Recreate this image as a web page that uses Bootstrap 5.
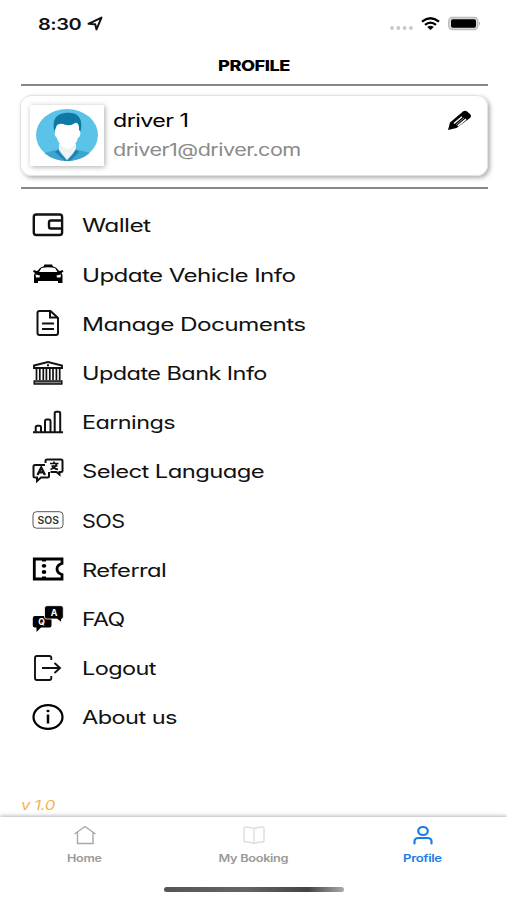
<!DOCTYPE html>
<html lang="en">
<head>
<meta charset="utf-8">
<meta name="viewport" content="width=device-width, initial-scale=1">
<title>Profile</title>
<link href="https://cdn.jsdelivr.net/npm/bootstrap@5.3.0/dist/css/bootstrap.min.css" rel="stylesheet">
<style>
body{font-family:Inter,"Liberation Sans",sans-serif;font-feature-settings:"cv11";color:#111;background:#fff;line-height:1}
.screen{height:900px;overflow:hidden}
svg{display:block;flex:none;overflow:visible}
.fit{display:inline-block;white-space:nowrap;transform-origin:0 50%;letter-spacing:-.025em}
.status{height:48px;padding:0 26px 0 37.5px}
.clock{font-size:16px;font-weight:600;width:42px}
.title{height:36px;padding-left:218px}
.title .fit{font-size:14.5px;font-weight:800;color:#000}
.rule{height:2px;margin:0 19.5px 0 20.5px;background:#878787}
.user{height:81px;margin:9px 19px 11px 20px;border:1px solid #e2e2e2;border-radius:11px;box-shadow:2px 2px 4px rgba(0,0,0,.32);padding:9px 15px 0 9px}
.photo{width:74px;height:61px;background:#fff;box-shadow:1px 1px 5px rgba(0,0,0,.33)}
.who{padding:7px 0 0 9px}
.uname{font-size:18px;height:18px;color:#000}
.mail{font-size:17px;height:18px;margin-top:12.5px;color:#8a8a8a}
.menu{padding:12px 0 0 32px}
.entry{height:49.2px}
.entry .fit{font-size:18.3px;margin-left:17.5px;padding-top:1px}
.version{height:24px;padding-left:20.5px;margin-top:51.8px;color:#f6b252;font-style:italic;font-size:13.5px}
.tabs{height:83px;box-shadow:0 -1px 4px rgba(0,0,0,.3)}
.tab{font-size:10.4px;font-weight:600;color:#9a9a9a;padding-top:8px}
.tab svg{margin-bottom:7px}
.tab.on{color:#1a7cea}
.homebar{width:180px;height:5px;border-radius:3px;background:linear-gradient(90deg,#555,#656565 45%,#444 80%,#aaa)}
</style>
</head>
<body>
<main class="screen d-flex flex-column">
  <header class="status d-flex align-items-center">
    <span class="clock"><span class="fit" data-w="42.5">8:30</span></span>
    <svg class="ms-2" width="16" height="15" viewBox="0 0 16 15"><path d="M.5 7.800 13.500 1.600 8.500 13.400 7.200 8.200Z" fill="none" stroke="#111" stroke-width="2" stroke-linejoin="round"/></svg>
    <svg class="ms-auto me-2 mt-2" width="23" height="4" viewBox="0 0 23 4" fill="#c8c8c8"><circle cx="2" cy="2" r="1.900"/><circle cx="8.300" cy="2" r="1.900"/><circle cx="14.600" cy="2" r="1.900"/><circle cx="20.900" cy="2" r="1.900"/></svg>
    <svg class="me-2" width="19" height="13" viewBox="0 0 19 13" fill="none" stroke="#000" stroke-width="2.300"><path d="M1 4.600Q9.500-2.100 18 4.600M4 7.900Q9.500 3.400 15 7.900"/><path d="M6.200 9.900Q9.500 7.600 12.800 9.900L9.500 12.900Z" fill="#000" stroke="none"/></svg>
    <svg width="33" height="13" viewBox="0 0 33 13"><rect x=".8" y=".5" width="29" height="12" rx="3.500" fill="#ddd" stroke="#bbb" stroke-width="1.400"/><rect x="3" y="2.300" width="25" height="8.500" rx="1.800"/><path d="M31 4.500Q33 6.500 31 8.500Z" fill="#aaa"/></svg>
  </header>
  <h1 class="title d-flex align-items-center m-0"><span class="fit" data-w="71.500">PROFILE</span></h1>
  <div class="rule"></div>
  <section class="user d-flex align-items-start">
    <div class="photo d-flex align-items-center justify-content-center">
      <svg width="62" height="52" viewBox="0 0 62 52">
        <defs><clipPath id="face"><ellipse cx="31" cy="26" rx="31" ry="26"/></clipPath></defs>
        <g clip-path="url(#face)">
          <rect width="62" height="52" fill="#5cc3e8"/>
          <path d="M5 52 8 45Q10 43 20 41L31 50 42 41Q53 43 55 45L58 52Z" fill="#3da3d0"/>
          <path d="M23 35V41L31 51 40 41V35Z" fill="#eef2f5"/>
          <path d="M22 40 19 43 29 52H31Q25 46 22 40ZM40 40 43 43 34 52H31Q37 46 40 40Z" fill="#2381ae"/>
          <path d="M18 21C16 8 22 5 29 4 39 3 47 6 45 21L42 25H20Z" fill="#0c7aa5"/>
          <path d="M21 16Q25 14 27 15 34 18 39 14 42 13 43 18V21Q45 22 44 27L42 29Q40 36 35 39 31 41 27 38 22 34 21 29 18 27 19 21Z" fill="#fff"/>
        </g>
      </svg>
    </div>
    <div class="who d-flex flex-column flex-grow-1">
      <div class="uname"><span class="fit" data-w="75">driver 1</span></div>
      <div class="mail"><span class="fit" data-w="188">driver1@driver.com</span></div>
    </div>
    <svg class="mt-1" width="25" height="22" viewBox="0 0 25 22"><path d="M1 21 3 13.500 16 2.500Q18 1 20 2.500L23 5Q25 7 23 9L9.500 19Z"/><path d="M7 14.500 15 7.800M10.800 16.800 19 10.200" stroke="#fff" stroke-width="1.500"/><path d="M9 15.700 17 9" stroke="#aaa" stroke-width=".9"/></svg>
  </section>
  <div class="rule"></div>
  <nav class="menu">
    <div class="entry d-flex align-items-center">
      <svg width="32" height="26" viewBox="0 0 32 26" fill="none" stroke="#111" stroke-width="2.400"><rect x="1.800" y="2.500" width="28.300" height="20.500" rx="2.500"/><path d="M30 8.500H19Q17 8.500 17 10.500V14.500Q17 16.500 19 16.500H30"/></svg>
      <span class="fit" data-w="68.500">Wallet</span></div>
    <div class="entry d-flex align-items-center">
      <svg width="32" height="26" viewBox="0 0 32 26"><path d="M11.500 5.500 12.500 3.500H20L21 5.500Q24.500 6 26.500 9.500L28 10 30.500 9 31.500 10.500 29.500 12 30.500 14V22H26V20H6V22H2V14L3 12 1 10.500 2 9 4.500 10 6 9.500Q8 6 11.500 5.500Z"/><path d="M9.500 7Q16 5.600 23 7L25.500 11H7Z" fill="#fff"/><path d="M3.500 13.500 8 14.500 7.500 16.500H4ZM29 13.500 24.500 14.500 25 16.500H28.500Z" fill="#fff"/></svg>
      <span class="fit" data-w="213">Update Vehicle Info</span></div>
    <div class="entry d-flex align-items-center">
      <svg width="32" height="26" viewBox="0 0 32 26" fill="none" stroke="#111" stroke-width="2"><path d="M18.500 1H7.500Q5.500 1 5.500 3V23Q5.500 25 7.500 25H24Q26 25 26 23V8Z" stroke-linejoin="round"/><path d="M18 1V7.500H26M10 13.500H22M10 19H22"/></svg>
      <span class="fit" data-w="224">Manage Documents</span></div>
    <div class="entry d-flex align-items-center">
      <svg width="32" height="26" viewBox="0 0 32 26" fill="none" stroke="#111" stroke-width="1.900"><path d="M2 5.500 16 2 30 5.500V8H2Z"/><path d="M15 5.200H17" /><path d="M4.500 9V20M7.800 9V20M11.300 9V20M14.400 9V20M17.800 9V20M21 9V20M24.400 9V20M27.700 9V20" stroke-width="1.700"/><path d="M2.200 21H29.800V24H2.200Z" fill="#888" stroke-width="1.500"/></svg>
      <span class="fit" data-w="185.500">Update Bank Info</span></div>
    <div class="entry d-flex align-items-center">
      <svg width="32" height="26" viewBox="0 0 32 26" fill="none" stroke="#111" stroke-width="2"><path d="M1 23.200H31M3.700 23V18.500Q3.700 16.700 5.200 16.700H7.500Q9 16.700 9 18.500V23M13 23V12.500Q13 10.500 14.500 10.500H17Q18.500 10.500 18.500 12.500V23M22.700 23V4.500Q22.700 2.700 24.200 2.700H26.700Q28.200 2.700 28.200 4.500V23"/></svg>
      <span class="fit" data-w="93.500">Earnings</span></div>
    <div class="entry d-flex align-items-center">
      <svg width="32" height="26" viewBox="0 0 32 26" fill="none" stroke="#111" stroke-width="2"><path d="M13.500 5V3Q13.500 1.500 15 1.500H29Q30.500 1.500 30.500 3V12.500Q30.500 14 29 14H27.500V16.500L24.500 14H18.500"/><path d="M13 7H3Q1.500 7 1.500 8.500V18Q1.500 19.500 3 19.500H5V23L9 19.500H15.500Q17 19.500 17 18V14"/><path d="M5.500 17 9.200 9.500 13 17M7 14.300H11.500" stroke-width="2.300"/><path d="M18 5.500H26.500M22 3.500V5.500M19.500 8H25.500M24.500 6Q23.500 9.500 18.500 11.500M20 8Q21.500 10.500 26 11.500" stroke-width="1.700"/></svg>
      <span class="fit" data-w="182.500">Select Language</span></div>
    <div class="entry d-flex align-items-center">
      <svg width="32" height="26" viewBox="0 0 32 26"><rect x="1" y="4.700" width="30" height="16.500" rx="3.500" fill="none" stroke="#555" stroke-width="1"/><text x="5.500" y="16.700" font-size="10" font-weight="600" textLength="21.500" lengthAdjust="spacingAndGlyphs" fill="#333">SOS</text></svg>
      <span class="fit" data-w="42.500">SOS</span></div>
    <div class="entry d-flex align-items-center">
      <svg width="32" height="26" viewBox="0 0 32 26"><path d="M2.300 3H30V7.500Q25 9 25 13T30 18.500V23H2.300Z" fill="none" stroke="#000" stroke-width="2.800"/><ellipse cx="12" cy="9.800" rx="2.300" ry="1.900"/><ellipse cx="12" cy="16" rx="2.300" ry="1.900"/><path d="M10 3H14V5.400H10ZM10 20.600H14V23H10Z"/></svg>
      <span class="fit" data-w="84.500">Referral</span></div>
    <div class="entry d-flex align-items-center">
      <svg width="32" height="26" viewBox="0 0 32 26"><path d="M3 10H17Q19.500 10 19.500 12V19.500Q19.500 21.500 17.500 21.500H9L4.500 26V21.500H3Q.8 21.500 .8 19.500V12Q.8 10 3 10Z"/><path d="M15 -.300H29Q31.300-.300 31.300 2V11Q31.300 13 29.500 13V16.500L25 13H15Q12.500 13 12.500 11V2Q12.500-.300 15-.300Z" stroke="#fff" stroke-width=".8"/><g fill="#fff" font-size="9" font-weight="700"><text x="18.800" y="9.500">A</text><text x="6.300" y="18.800" font-size="8.500">Q</text></g></svg>
      <span class="fit" data-w="43">FAQ</span></div>
    <div class="entry d-flex align-items-center">
      <svg width="32" height="26" viewBox="0 0 32 26" fill="none" stroke="#111" stroke-width="1.900"><path d="M19.300 5V3Q19.300 1 17.300 1H5Q3 1 3 3V23Q3 25 5 25H17.300Q19.300 25 19.300 23V21M10 13H27.500M22.500 8 28 13 22.500 18"/></svg>
      <span class="fit" data-w="74.500">Logout</span></div>
    <div class="entry d-flex align-items-center">
      <svg width="32" height="26" viewBox="0 0 32 26"><ellipse cx="16" cy="13" rx="14.500" ry="11.900" fill="none" stroke="#000" stroke-width="2.200"/><path d="M16 10.500V19.500" stroke="#000" stroke-width="2.500"/><ellipse cx="16" cy="7" rx="1.600" ry="1.300"/></svg>
      <span class="fit" data-w="95.500">About us</span></div>
  </nav>
  <div class="version d-flex align-items-center"><span class="fit" data-w="33.500">v 1.0</span></div>
  <footer class="tabs d-flex flex-column">
    <div class="row g-0 text-center">
      <div class="tab col d-flex flex-column align-items-center"><svg width="24" height="22" viewBox="0 0 24 22" fill="none" stroke="#a8a8a8" stroke-width="1.400"><path d="M1.500 9 12 1.500 22.500 9M4.500 7.500V18.500H20V7.500"/></svg><span class="fit" data-w="35">Home</span></div>
      <div class="tab col d-flex flex-column align-items-center"><svg width="24" height="22" viewBox="0 0 24 22" fill="none" stroke="#dedede" stroke-width="1.500"><path d="M12 3.500Q7 1.500 3.500 2 2 2 2 4V15Q2 17 3.500 17 8 16.500 12 18.500 16 16.500 20.500 17 22 17 22 15V4Q22 2 20.500 2 17 1.500 12 3.500V18.500"/></svg><span class="fit" data-w="70">My Booking</span></div>
      <div class="tab on col d-flex flex-column align-items-center"><svg width="24" height="22" viewBox="0 0 24 22" fill="none" stroke="#1a7cea" stroke-width="2.200" stroke-linecap="round"><ellipse cx="12" cy="6" rx="4.800" ry="4"/><path d="M3.500 18.500V16.500Q3.500 13 7.500 13H16.500Q20.500 13 20.500 16.500V18.500"/></svg><span class="fit" data-w="39">Profile</span></div>
    </div>
    <div class="homebar mx-auto mt-auto mb-2"></div>
  </footer>
</main>
<script src="https://cdn.jsdelivr.net/npm/bootstrap@5.3.0/dist/js/bootstrap.bundle.min.js"></script>
<script>
// Widen each label to its design width; tab labels grow from their centre.
document.querySelectorAll('.fit').forEach(function (el) {
  if (el.closest('.tab')) el.style.transformOrigin = '50% 50%';
  el.style.transform = 'scaleX(' + (el.dataset.w / el.offsetWidth).toFixed(4) + ')';
});
</script>
</body>
</html>
